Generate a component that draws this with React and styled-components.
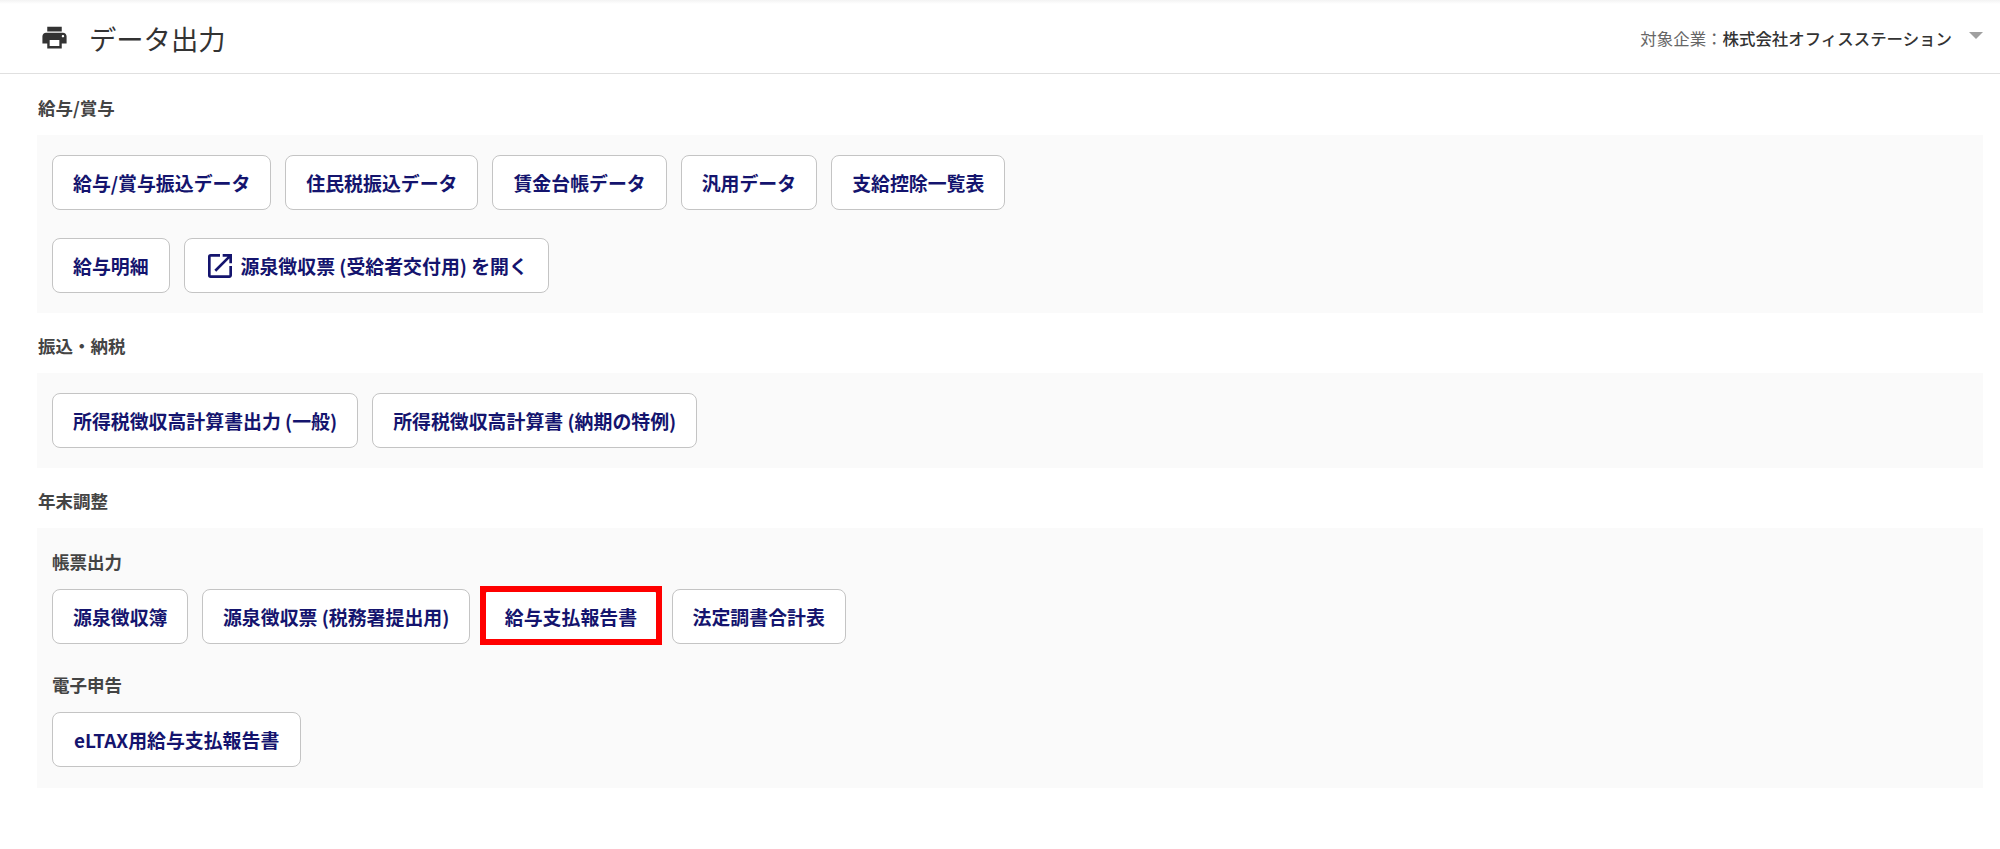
import React from 'react';
import styled, { createGlobalStyle } from 'styled-components';
import { MdPrint, MdOpenInNew } from 'react-icons/md';

const GlobalStyle = createGlobalStyle`
  html, body {
    margin: 0;
    padding: 0;
    background: #fff;
    font-family: "Noto Sans CJK JP", "Noto Sans", sans-serif;
  }
`;

const Page = styled.div`
  width: 2000px;
  min-height: 849px;
  background: linear-gradient(#f3f3f3, #fff 4px);
`;
const Header = styled.header`
  height: 74px;
  box-sizing: border-box;
  display: flex;
  align-items: center;
  margin-bottom: 1px;
  padding: 2px 17px 0 40px;
  border-bottom: 1px solid #e0e0e0;
`;
const PrintIcon = styled(MdPrint)`
  font-size: 29px;
  color: #333;
  margin-right: 20px;
`;
const Title = styled.h1`
  flex: 1;
  margin: 0;
  font-size: 27.3px;
  font-weight: 400;
  color: #333;
`;
const Company = styled.div`
  font-size: 16.45px;
  color: #666;
  margin-right: 17px;
  b {
    font-weight: 500;
    color: #333;
  }
`;
const Caret = styled.span`
  width: 0;
  height: 0;
  border-left: 7px solid transparent;
  border-right: 7px solid transparent;
  border-top: 7px solid #a0a0a0;
  margin-top: -4px;
`;
const Main = styled.main`
  padding: 0 17px 0 37px;
`;
const SectionLabel = styled.h2`
  margin: 0;
  padding: 19px 1px 13px;
  font-size: 17.5px;
  line-height: 28px;
  font-weight: 700;
  color: #444;
`;
const Panel = styled.section`
  background: #fafafa;
  padding: 20px 15px ${({ $bottom }) => $bottom || 20}px;
`;
const ButtonStack = styled.div`
  display: flex;
  flex-direction: column;
  gap: 28px;
`;
const ButtonRow = styled.div`
  display: flex;
  gap: ${({ $tight }) => ($tight ? 13.5 : 14)}px;
`;
const SubLabel = styled.h3`
  margin: ${({ $first }) => ($first ? '0' : '27px')} 0 13px;
  font-size: 17.5px;
  line-height: 28px;
  font-weight: 700;
  color: #444;
`;
const Button = styled.button`
  position: relative;
  height: 55px;
  box-sizing: border-box;
  display: inline-flex;
  align-items: center;
  gap: 8px;
  padding: 0 ${({ $wide }) => ($wide ? 21 : 20)}px;
  background: #fff;
  border: 1.5px solid #c4c4c4;
  border-radius: 8px;
  font-family: inherit;
  font-size: 18.9px;
  font-weight: 700;
  color: #14146e;
  white-space: nowrap;
  &::after {
    content: '';
    display: ${({ $marked }) => ($marked ? 'block' : 'none')};
    position: absolute;
    inset: -4px -5px -2px -5px;
    border: 6px solid #f00;
  }
`;
const OpenIcon = styled(MdOpenInNew)`
  font-size: 32px;
  margin: 0 -3px 0 -1px;
`;

function App() {
  return (
    <Page>
      <GlobalStyle />
      <Header>
        <PrintIcon />
        <Title>データ出力</Title>
        <Company>
          対象企業：<b>株式会社オフィスステーション</b>
        </Company>
        <Caret />
      </Header>
      <Main>
        <SectionLabel>給与/賞与</SectionLabel>
        <Panel>
          <ButtonStack>
            <ButtonRow>
              <Button>給与/賞与振込データ</Button>
              <Button>住民税振込データ</Button>
              <Button>賃金台帳データ</Button>
              <Button>汎用データ</Button>
              <Button>支給控除一覧表</Button>
            </ButtonRow>
            <ButtonRow>
              <Button>給与明細</Button>
              <Button>
                <OpenIcon />
                源泉徴収票 (受給者交付用) を開く
              </Button>
            </ButtonRow>
          </ButtonStack>
        </Panel>
        <SectionLabel>振込・納税</SectionLabel>
        <Panel>
          <ButtonRow>
            <Button>所得税徴収高計算書出力 (一般)</Button>
            <Button>所得税徴収高計算書 (納期の特例)</Button>
          </ButtonRow>
        </Panel>
        <SectionLabel>年末調整</SectionLabel>
        <Panel $bottom={21}>
          <SubLabel $first>帳票出力</SubLabel>
          <ButtonRow $tight>
            <Button>源泉徴収簿</Button>
            <Button>源泉徴収票 (税務署提出用)</Button>
            <Button $marked>給与支払報告書</Button>
            <Button>法定調書合計表</Button>
          </ButtonRow>
          <SubLabel>電子申告</SubLabel>
          <ButtonRow>
            <Button $wide>eLTAX用給与支払報告書</Button>
          </ButtonRow>
        </Panel>
      </Main>
    </Page>
  );
}

export default App;
